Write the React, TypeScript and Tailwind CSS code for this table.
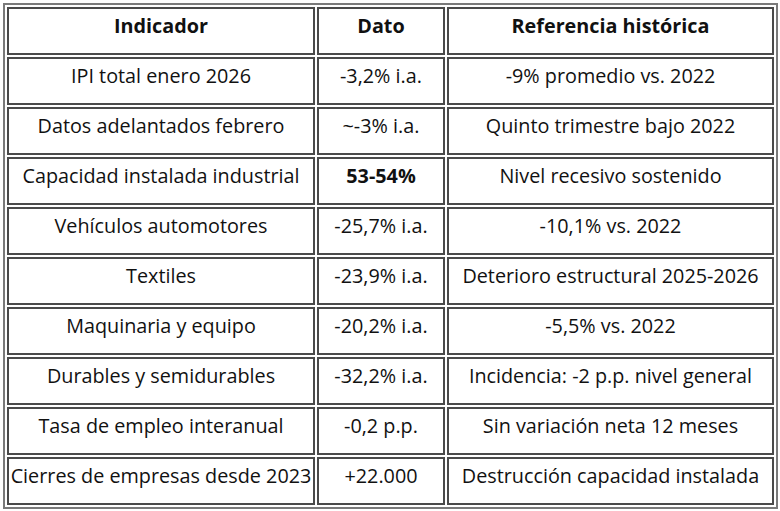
const rows: { ind: string; dato: string; ref: string; bold?: boolean }[] = [
  { ind: 'IPI total enero 2026', dato: '-3,2% i.a.', ref: '-9% promedio vs. 2022' },
  { ind: 'Datos adelantados febrero', dato: '~-3% i.a.', ref: 'Quinto trimestre bajo 2022' },
  { ind: 'Capacidad instalada industrial', dato: '53-54%', ref: 'Nivel recesivo sostenido', bold: true },
  { ind: 'Vehículos automotores', dato: '-25,7% i.a.', ref: '-10,1% vs. 2022' },
  { ind: 'Textiles', dato: '-23,9% i.a.', ref: 'Deterioro estructural 2025-2026' },
  { ind: 'Maquinaria y equipo', dato: '-20,2% i.a.', ref: '-5,5% vs. 2022' },
  { ind: 'Durables y semidurables', dato: '-32,2% i.a.', ref: 'Incidencia: -2 p.p. nivel general' },
  { ind: 'Tasa de empleo interanual', dato: '-0,2 p.p.', ref: 'Sin variación neta 12 meses' },
  { ind: 'Cierres de empresas desde 2023', dato: '+22.000', ref: 'Destrucción capacidad instalada' },
];

const cell =
  'h-[48px] border-2 border-[#4a4a4a] align-top pt-[4px] px-0 text-center whitespace-nowrap overflow-visible';

export default function App() {
  return (
    <div className="w-[780px] h-[511px] bg-white pt-[3px] pl-[3px] font-['Open_Sans',sans-serif] text-[19.8px] leading-[25px] text-[#111]">
      <table className="table-fixed border-separate border-spacing-[2px] border-2 border-[#7a7a7a] w-[775px]">
        <colgroup>
          <col className="w-[308px]" />
          <col className="w-[128px]" />
          <col className="w-[327px]" />
        </colgroup>
        <thead>
          <tr>
            <th className={`${cell} font-bold`}>Indicador</th>
            <th className={`${cell} font-bold`}>Dato</th>
            <th className={`${cell} font-bold`}>Referencia histórica</th>
          </tr>
        </thead>
        <tbody>
          {rows.map((r) => (
            <tr key={r.ind}>
              <td className={cell}>{r.ind}</td>
              <td className={`${cell} ${r.bold ? 'font-bold' : ''}`}>{r.dato}</td>
              <td className={cell}>{r.ref}</td>
            </tr>
          ))}
        </tbody>
      </table>
    </div>
  );
}
